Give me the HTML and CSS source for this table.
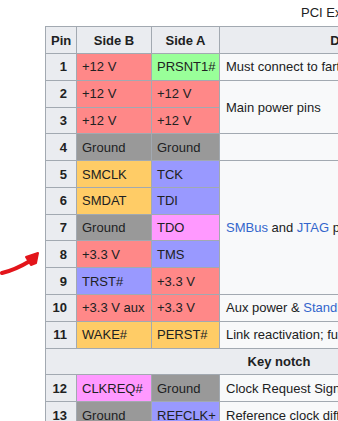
FILE: index.html
```html
<!DOCTYPE html>
<html>
<head>
<meta charset="utf-8">
<link rel="stylesheet" href="styles.css">
</head>
<body>
<div class="page">
  <table class="pinout">
    <caption class="cap">PCI Express connector pinout</caption>
    <colgroup>
      <col class="c-pin"><col class="c-b"><col class="c-a"><col class="c-desc">
    </colgroup>
    <thead>
      <tr><th>Pin</th><th>Side B</th><th>Side A</th><th>Description</th></tr>
    </thead>
    <tbody>
      <tr><th class="num">1</th><td class="red">+12 V</td><td class="green">PRSNT1#</td><td class="desc">Must connect to farthest PRSNT2# pin</td></tr>
      <tr><th class="num">2</th><td class="red">+12 V</td><td class="red">+12 V</td><td class="desc" rowspan="2">Main power pins</td></tr>
      <tr><th class="num">3</th><td class="red">+12 V</td><td class="red">+12 V</td></tr>
      <tr><th class="num">4</th><td class="gray">Ground</td><td class="gray">Ground</td><td class="desc"></td></tr>
      <tr><th class="num">5</th><td class="orange">SMCLK</td><td class="blue">TCK</td><td class="desc" rowspan="5"><a href="#">SMBus</a> and <a href="#">JTAG</a> port pins</td></tr>
      <tr><th class="num">6</th><td class="orange">SMDAT</td><td class="blue">TDI</td></tr>
      <tr><th class="num">7</th><td class="gray">Ground</td><td class="pink">TDO</td></tr>
      <tr><th class="num">8</th><td class="red">+3.3 V</td><td class="blue">TMS</td></tr>
      <tr><th class="num">9</th><td class="blue">TRST#</td><td class="red">+3.3 V</td></tr>
      <tr><th class="num">10</th><td class="red">+3.3 V aux</td><td class="red">+3.3 V</td><td class="desc">Aux power &amp; <a href="#">Standby power</a></td></tr>
      <tr><th class="num">11</th><td class="orange">WAKE#</td><td class="orange">PERST#</td><td class="desc">Link reactivation; fundamental reset</td></tr>
      <tr><th class="notch" colspan="4">Key notch</th></tr>
      <tr><th class="num">12</th><td class="pink">CLKREQ#</td><td class="gray">Ground</td><td class="desc">Clock Request Signal</td></tr>
      <tr><th class="num">13</th><td class="gray">Ground</td><td class="blue">REFCLK+</td><td class="desc">Reference clock differential pair</td></tr>
      <tr><th class="num">14</th><td class="gray">Ground</td><td class="blue">REFCLK−</td><td class="desc"></td></tr>
    </tbody>
  </table>
  <svg class="arrow" width="45" height="30" viewBox="0 0 45 30">
    <path d="M2 25 Q15 22 30 13" fill="none" stroke="#e3151b" stroke-width="4" stroke-linecap="round"/>
    <path d="M26 9 L38 5 L36 15 L31 17 Z" fill="#e3151b" stroke="#e3151b" stroke-width="2" stroke-linejoin="round"/>
  </svg>
</div>
</body>
</html>
```

FILE: styles.css
```css
html, body {
  margin: 0;
  padding: 0;
  overflow: hidden;
  background: #ffffff;
}

.page {
  position: relative;
  padding: 3px 0 0 45px;
  font-family: "Liberation Sans", Arial, sans-serif;
  font-size: 13px;
  color: #202122;
}

.pinout {
  border-collapse: collapse;
  table-layout: fixed;
  width: 467px;
  border: 1px solid #a2a9b1;
  background: #f8f9fa;
}

.cap {
  text-align: left;
  padding: 0 0 3px 256px;
  line-height: 20px;
  white-space: nowrap;
}

.c-pin { width: 31px; }
.c-b { width: 75px; }
.c-a { width: 68px; }
.c-desc { width: 293px; }

.pinout th,
.pinout td {
  border: 1px solid #a2a9b1;
  padding: 2.4px 5px;
  line-height: 21px;
  white-space: nowrap;
  overflow: hidden;
}

.pinout th {
  background: #eaecf0;
  font-weight: bold;
  text-align: center;
}

.pinout thead th {
  padding-top: 3px;
  padding-bottom: 2px;
}

.pinout th.num {
  text-align: right;
  padding-right: 9px;
}

.pinout td.desc {
  background: #f8f9fa;
  vertical-align: middle;
  padding-left: 6px;
}

.pinout a {
  color: #3366cc;
  text-decoration: none;
}

.red { background: #ff8888; }
.green { background: #99ff99; }
.gray { background: #999999; }
.orange { background: #ffcc66; }
.blue { background: #9999ff; }
.pink { background: #ff99ff; }

.arrow {
  position: absolute;
  left: 0;
  top: 248px;
}
```
